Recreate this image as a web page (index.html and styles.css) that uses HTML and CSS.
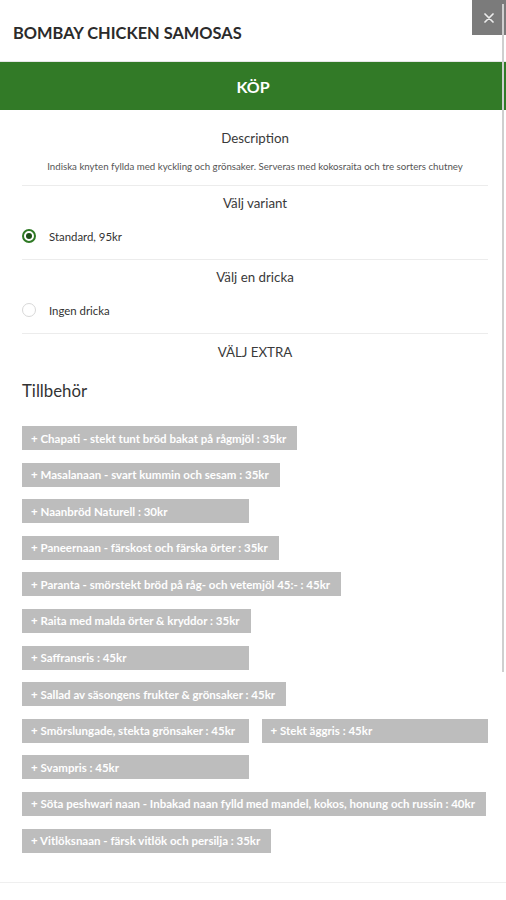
FILE: index.html
```html
<!DOCTYPE html>
<html lang="sv">
<head>
<meta charset="utf-8">
<title>Bombay Chicken Samosas</title>
<link rel="stylesheet" href="styles.css">
</head>
<body>
<div class="modal">
  <header class="modal-header">
    <h1 class="title">BOMBAY CHICKEN SAMOSAS</h1>
    <button class="close" aria-label="Stäng">
      <svg width="10" height="10" viewBox="0 0 10 10"><path d="M1 1L9 9M9 1L1 9" stroke="#ececec" stroke-width="1.7" stroke-linecap="round"/></svg>
    </button>
  </header>
  <div class="buy">KÖP</div>
  <div class="content">
    <section class="block desc">
      <h2 class="heading">Description</h2>
      <p class="desc-text">Indiska knyten fyllda med kyckling och grönsaker. Serveras med kokosraita och tre sorters chutney</p>
    </section>
    <section class="block">
      <h2 class="heading">Välj variant</h2>
      <label class="option"><span class="radio checked"></span><span class="opt-label">Standard, 95kr</span></label>
    </section>
    <section class="block">
      <h2 class="heading">Välj en dricka</h2>
      <label class="option"><span class="radio"></span><span class="opt-label">Ingen dricka</span></label>
    </section>
    <section class="extra">
      <h2 class="heading">VÄLJ EXTRA</h2>
      <h3 class="group">Tillbehör</h3>
      <div class="chips">
        <button class="chip">+ Chapati - stekt tunt bröd bakat på rågmjöl : 35kr</button>
        <button class="chip">+ Masalanaan - svart kummin och sesam : 35kr</button>
        <button class="chip">+ Naanbröd Naturell : 30kr</button>
        <button class="chip">+ Paneernaan - färskost och färska örter : 35kr</button>
        <button class="chip">+ Paranta - smörstekt bröd på råg- och vetemjöl 45:- : 45kr</button>
        <button class="chip">+ Raita med malda örter &amp; kryddor : 35kr</button>
        <button class="chip">+ Saffransris : 45kr</button>
        <button class="chip">+ Sallad av säsongens frukter &amp; grönsaker : 45kr</button>
        <button class="chip">+ Smörslungade, stekta grönsaker : 45kr</button>
        <button class="chip">+ Stekt äggris : 45kr</button>
        <button class="chip">+ Svampris : 45kr</button>
        <button class="chip">+ Söta peshwari naan - Inbakad naan fylld med mandel, kokos, honung och russin : 40kr</button>
        <button class="chip">+ Vitlöksnaan - färsk vitlök och persilja : 35kr</button>
      </div>
    </section>
  </div>
  <footer class="modal-footer"></footer>
  <div class="scrollbar"></div>
</div>
</body>
</html>
```
FILE: styles.css
```css
* { box-sizing: border-box; }
html, body { margin: 0; padding: 0; background: #fff; }
body { font-family: Lato, "Open Sans", sans-serif; color: #333; }

.modal { position: relative; width: 506px; min-height: 900px; }

.modal-header {
  height: 62px;
  display: flex;
  align-items: center;
  padding: 4px 13px 0;
  border-bottom: 1px solid #e6e6e6;
}
.title {
  margin: 0;
  font-size: 16.4px;
  font-weight: 700;
  color: #2b2b2b;
}
.close {
  position: absolute;
  top: 0; right: 0;
  width: 34px; height: 35px;
  border: 0;
  background: #7b7b7b;
  display: flex; align-items: center; justify-content: center;
  padding: 0;
}

.buy {
  height: 48px;
  background: #327a27;
  color: #fff;
  font-weight: 700;
  font-size: 16px;
  display: flex; align-items: center; justify-content: center;
}

.content { padding: 0 18px 0 22px; }

.block { border-bottom: 1px solid #ececec; padding: 7px 0 13px; }
.block.desc { padding-top: 18px; }

.heading {
  margin: 0;
  font-size: 13.3px;
  font-weight: 400;
  line-height: 20px;
  text-align: center;
  color: #3a3a3a;
}
.desc-text {
  margin: 12px 0 0;
  font-size: 9.7px;
  line-height: 12px;
  text-align: center;
  color: #555;
  white-space: nowrap;
}

.option {
  margin-top: 13px;
  height: 20px;
  display: flex;
  align-items: center;
}
.radio {
  width: 14px; height: 14px;
  border-radius: 50%;
  border: 1px solid #d8d8d8;
  display: flex; align-items: center; justify-content: center;
}
.radio.checked { border: 2px solid #2f7a25; }
.radio.checked::after {
  content: "";
  width: 6px; height: 6px;
  border-radius: 50%;
  background: #1e4f18;
}
.opt-label { margin-left: 13px; font-size: 11.4px; color: #333; }

.extra { padding-top: 8px; padding-bottom: 29px; }
.group {
  margin: 18px 0 0;
  font-size: 16.8px;
  font-weight: 400;
  line-height: 22px;
  color: #333;
}

.chips {
  margin-top: 24px;
  display: flex;
  flex-wrap: wrap;
  column-gap: 13px;
  row-gap: 12.6px;
}
.chip {
  min-width: calc(50% - 6.5px);
  height: 24px;
  border: 0;
  background: #bdbdbd;
  color: #fff;
  font-family: Lato, "Open Sans", sans-serif;
  font-weight: 700;
  font-size: 11.5px;
  text-align: left;
  padding: 0 11px 0 9px;
  white-space: nowrap;
}

.modal-footer { border-top: 1px solid #efefef; height: 20px; }

.scrollbar {
  position: absolute;
  top: 4px; right: 2px;
  width: 2px; height: 668px;
  background: #cfcfcf;
}
```
